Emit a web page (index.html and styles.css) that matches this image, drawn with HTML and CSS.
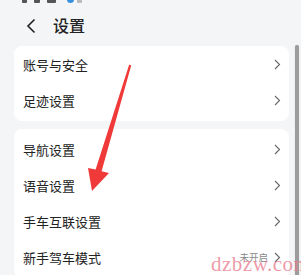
FILE: index.html
```html
<!DOCTYPE html>
<html lang="zh">
<head>
<meta charset="utf-8">
<link rel="stylesheet" href="styles.css">
</head>
<body>
<div class="status">
  <span class="si s1"></span>
  <span class="si s2"></span>
  <span class="si s3"></span>
  <span class="si dot"></span>
  <span class="si s4"></span>
</div>
<header class="header">
  <svg class="back" width="10" height="16" viewBox="0 0 10 16"><path d="M8.5 1.5 L2 8 L8.5 14.5" fill="none" stroke="#222" stroke-width="1.6"/></svg>
  <span class="title">设置</span>
</header>
<main class="content">
  <section class="card card1">
    <div class="row"><span class="label">账号与安全</span><svg class="chev" width="7" height="11" viewBox="0 0 7 11"><path d="M1 1 L5.5 5.5 L1 10" fill="none" stroke="#666" stroke-width="1.1"/></svg></div>
    <div class="row"><span class="label">足迹设置</span><svg class="chev" width="7" height="11" viewBox="0 0 7 11"><path d="M1 1 L5.5 5.5 L1 10" fill="none" stroke="#666" stroke-width="1.1"/></svg></div>
  </section>
  <section class="card card2">
    <div class="row"><span class="label">导航设置</span><svg class="chev" width="7" height="11" viewBox="0 0 7 11"><path d="M1 1 L5.5 5.5 L1 10" fill="none" stroke="#666" stroke-width="1.1"/></svg></div>
    <div class="row"><span class="label">语音设置</span><svg class="chev" width="7" height="11" viewBox="0 0 7 11"><path d="M1 1 L5.5 5.5 L1 10" fill="none" stroke="#666" stroke-width="1.1"/></svg></div>
    <div class="row"><span class="label">手车互联设置</span><svg class="chev" width="7" height="11" viewBox="0 0 7 11"><path d="M1 1 L5.5 5.5 L1 10" fill="none" stroke="#666" stroke-width="1.1"/></svg></div>
    <div class="row"><span class="label">新手驾车模式</span><span class="value">未开启</span><svg class="chev" width="7" height="11" viewBox="0 0 7 11"><path d="M1 1 L5.5 5.5 L1 10" fill="none" stroke="#666" stroke-width="1.1"/></svg></div>
  </section>
</main>
<div class="scrollbar"></div>
<svg class="arrow" width="301" height="275" viewBox="0 0 301 275">
  <polygon points="129.2,64.4 131.2,65.4 101.6,171.2 109,173 92,191 88,168 95.6,169.4" fill="#f03a3a"/>
</svg>
<div class="watermark">dzbzw.com</div>
</body>
</html>
```
FILE: styles.css
```css
html, body {
  margin: 0;
  padding: 0;
}
body {
  width: 301px;
  height: 275px;
  overflow: hidden;
  background: #f4f5f7;
  font-family: "Noto Sans CJK SC", "Noto Sans", sans-serif;
  color: #222;
  position: relative;
}
.status {
  height: 3px;
  display: flex;
  align-items: flex-end;
  gap: 7px;
  padding-left: 22px;
  overflow: hidden;
}
.si {
  display: block;
  height: 8px;
  background: #555;
  border-radius: 1px;
}
.s1 { width: 5px; }
.s2 { width: 6px; }
.s3 { width: 9px; }
.dot { width: 7px; height: 7px; border-radius: 50%; background: #3a90e0; margin-left: 4px; }
.s4 { width: 5px; background: #bbb; margin-left: -4px; }
.header {
  height: 43px;
  display: flex;
  align-items: center;
  padding-left: 26px;
  box-sizing: border-box;
}
.back {
  display: block;
  margin-right: 17px;
  margin-top: 2px;
}
.title {
  font-size: 16px;
  font-weight: 500;
  color: #222;
  line-height: 1;
  margin-top: 1px;
}
.content {
  display: flex;
  flex-direction: column;
  gap: 8px;
  padding: 0 12px 0 14px;
}
.card {
  background: #fff;
  border-radius: 8px;
  padding: 0 0 3px;
}
.card2 {
  padding-top: 2px;
}
.row {
  height: 36px;
  display: flex;
  align-items: center;
  padding: 0 8px 0 9px;
}
.label {
  font-size: 13px;
  color: #222;
  flex: 1;
  line-height: 1;
}
.value {
  font-size: 9.5px;
  color: #888;
  margin-right: 6px;
}
.chev {
  display: block;
}
.scrollbar {
  position: absolute;
  left: 295px;
  top: 45px;
  width: 4px;
  height: 240px;
  background: #9c9c9c;
  border-radius: 2px 2px 0 0;
  box-shadow: 0 0 1px #bbb;
}
.arrow {
  position: absolute;
  left: 0;
  top: 0;
}
.watermark {
  position: absolute;
  left: 211px;
  top: 254px;
  font-family: "Liberation Serif", serif;
  font-size: 21px;
  color: rgba(232, 120, 140, 0.75);
  letter-spacing: 0.5px;
  line-height: 1;
}
```
